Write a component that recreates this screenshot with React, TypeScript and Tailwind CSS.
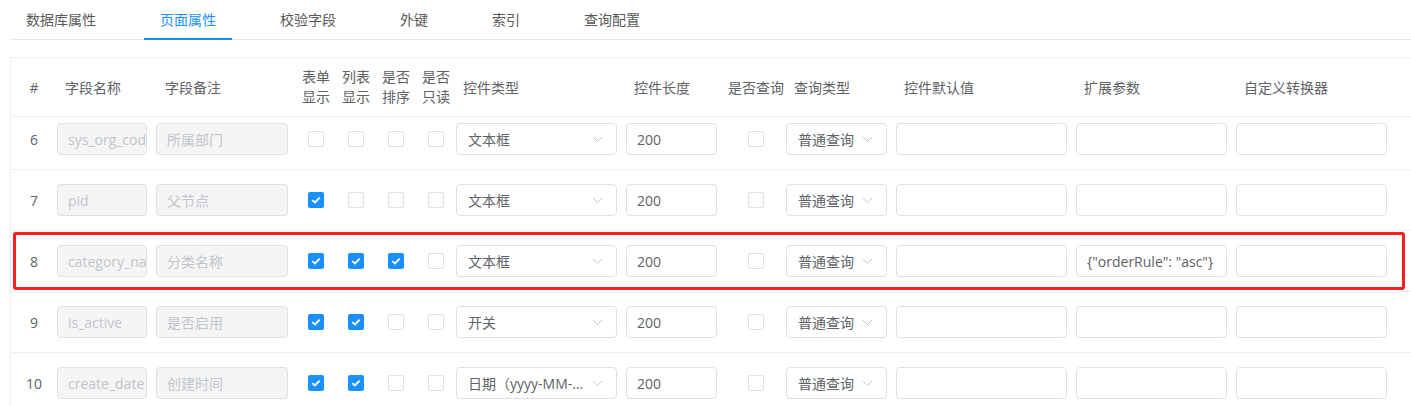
import React from 'react';

type Row = {
  no: number;
  name: string;
  remark: string;
  form: boolean;
  list: boolean;
  sort: boolean;
  type: string;
  ext: string;
};

const rows: Row[] = [
  { no: 6, name: 'sys_org_code', remark: '所属部门', form: false, list: false, sort: false, type: '文本框', ext: '' },
  { no: 7, name: 'pid', remark: '父节点', form: true, list: false, sort: false, type: '文本框', ext: '' },
  { no: 8, name: 'category_name', remark: '分类名称', form: true, list: true, sort: true, type: '文本框', ext: '{"orderRule": "asc"}' },
  { no: 9, name: 'is_active', remark: '是否启用', form: true, list: true, sort: false, type: '开关', ext: '' },
  { no: 10, name: 'create_date', remark: '创建时间', form: true, list: true, sort: false, type: '日期（yyyy-MM-dd）', ext: '' },
];

const tabs = ['数据库属性', '页面属性', '校验字段', '外键', '索引', '查询配置'];

const Check = ({ on }: { on: boolean }) =>
  on ? (
    <span className="w-4 h-4 rounded-[2px] bg-[#1890ff] flex items-center justify-center">
      <svg width="10" height="8" viewBox="0 0 10 8">
        <path d="M1.3 4.1l2.6 2.4L8.7 1.6" stroke="#fff" strokeWidth="1.8" fill="none" />
      </svg>
    </span>
  ) : (
    <span className="block w-4 h-4 rounded-[2px] border border-[#dcdfe6] bg-white" />
  );

const Chevron = () => (
  <svg width="11" height="7" viewBox="0 0 11 7" className="shrink-0">
    <path d="M1 1l4.5 4.5L10 1" stroke="#c0c4cc" strokeWidth="1" fill="none" />
  </svg>
);

const Input = ({ value = '', disabled = false, w }: { value?: string; disabled?: boolean; w: string }) => (
  <div
    className={`${w} h-[32px] rounded-[4px] border px-[10px] flex items-center overflow-hidden whitespace-nowrap ${
      disabled ? 'bg-[#f5f5f5] border-[#e0e0e0] text-[#c0c4cc]' : 'bg-white border-[#dcdfe6] text-[#606266]'
    }`}
  >
    {value}
  </div>
);

const Select = ({ value, w }: { value: string; w: string }) => (
  <div className={`${w} h-[32px] rounded-[4px] border border-[#dcdfe6] bg-white pl-[11px] pr-[13px] flex items-center text-[#606266]`}>
    <span className="flex-1 min-w-0 overflow-hidden text-ellipsis whitespace-nowrap">{value}</span>
    <span className="ml-[4px]">
      <Chevron />
    </span>
  </div>
);

const CheckCol = ({ on }: { on: boolean }) => (
  <div className="w-[40px] flex justify-center">
    <Check on={on} />
  </div>
);

const BodyRow = ({ r }: { r: Row }) => (
  <div className="flex items-center h-[61px] border-b border-[#ebeef5] text-[14px]">
    <div className="w-[46px] text-center text-[#606266]">{r.no}</div>
    <Input w="w-[90px]" value={r.name} disabled />
    <div className="ml-[9px]">
      <Input w="w-[132px]" value={r.remark} disabled />
    </div>
    <div className="ml-[8px] flex">
      <CheckCol on={r.form} />
      <CheckCol on={r.list} />
      <CheckCol on={r.sort} />
      <CheckCol on={false} />
    </div>
    <Select w="w-[161px]" value={r.type} />
    <div className="ml-[9px]">
      <Input w="w-[91px]" value="200" />
    </div>
    <div className="ml-[31px]">
      <Check on={false} />
    </div>
    <div className="ml-[22px]">
      <Select w="w-[101px]" value="普通查询" />
    </div>
    <div className="ml-[9px]">
      <Input w="w-[171px]" />
    </div>
    <div className="ml-[9px]">
      <Input w="w-[151px]" value={r.ext} />
    </div>
    <div className="ml-[9px]">
      <Input w="w-[151px]" />
    </div>
  </div>
);

const Two = ({ a, b }: { a: string; b: string }) => (
  <div className="w-[40px] text-center leading-[20px]">
    <div>{a}</div>
    <div>{b}</div>
  </div>
);

export default function App() {
  return (
    <div
      className="relative w-[1411px] h-[406px] overflow-hidden bg-white pl-[10px]"
      style={{ fontFamily: '"Open Sans", "Noto Sans CJK SC", sans-serif' }}
    >
      {/* tabs */}
      <div className="flex gap-[32px] h-[40px] border-b border-[#e4e7ed] text-[14px]">
        {tabs.map((t) => (
          <div
            key={t}
            className={`relative h-[40px] -mb-px px-[16px] flex items-center pb-[1px] ${
              t === '页面属性' ? 'text-[#1890ff]' : 'text-[#595959]'
            }`}
          >
            {t}
            {t === '页面属性' && <span className="absolute left-0 right-0 bottom-0 h-[2px] bg-[#1890ff]" />}
          </div>
        ))}
      </div>

      {/* table */}
      <div className="mt-[17px] w-[1420px] border-l border-t border-[#ebeef5]">
        <div className="flex items-center h-[59px] border-b border-[#ebeef5] text-[14px] text-[#606266]">
          <div className="w-[46px] text-center">#</div>
          <div className="w-[90px] pl-[8px]">字段名称</div>
          <div className="ml-[9px] w-[132px] pl-[9px]">字段备注</div>
          <div className="ml-[8px] flex">
            <Two a="表单" b="显示" />
            <Two a="列表" b="显示" />
            <Two a="是否" b="排序" />
            <Two a="是否" b="只读" />
          </div>
          <div className="w-[161px] pl-[7px]">控件类型</div>
          <div className="ml-[9px] w-[91px] pl-[8px]">控件长度</div>
          <div className="w-[69px] text-center pl-[9px] whitespace-nowrap">是否查询</div>
          <div className="w-[101px] pl-[8px]">查询类型</div>
          <div className="ml-[9px] w-[171px] pl-[8px]">控件默认值</div>
          <div className="ml-[9px] w-[151px] pl-[8px]">扩展参数</div>
          <div className="ml-[9px] w-[151px] pl-[8px]">自定义转换器</div>
        </div>
        <div className="h-[53px] overflow-hidden">
          <div className="-mt-[8px]">
            <BodyRow r={rows[0]} />
          </div>
        </div>
        {rows.slice(1).map((r) => (
          <BodyRow key={r.no} r={r} />
        ))}
      </div>

      {/* highlight annotation */}
      <div className="absolute left-[13px] top-[232px] w-[1392px] h-[58px] border-[3px] border-[#fa1e1e] rounded-[3px] pointer-events-none" />
    </div>
  );
}
